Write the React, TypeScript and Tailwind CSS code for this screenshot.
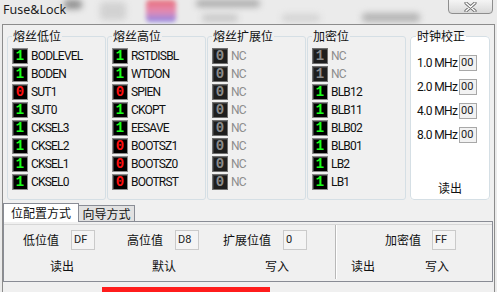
import React from 'react';

type Bit = { v: '0' | '1'; label: string; nc?: boolean };

const lowFuse: Bit[] = [
  { v: '1', label: 'BODLEVEL' },
  { v: '1', label: 'BODEN' },
  { v: '0', label: 'SUT1' },
  { v: '1', label: 'SUT0' },
  { v: '1', label: 'CKSEL3' },
  { v: '1', label: 'CKSEL2' },
  { v: '1', label: 'CKSEL1' },
  { v: '1', label: 'CKSEL0' },
];

const highFuse: Bit[] = [
  { v: '1', label: 'RSTDISBL' },
  { v: '1', label: 'WTDON' },
  { v: '0', label: 'SPIEN' },
  { v: '1', label: 'CKOPT' },
  { v: '1', label: 'EESAVE' },
  { v: '0', label: 'BOOTSZ1' },
  { v: '0', label: 'BOOTSZ0' },
  { v: '0', label: 'BOOTRST' },
];

const extFuse: Bit[] = Array.from({ length: 8 }, () => ({ v: '0' as const, label: 'NC', nc: true }));

const lockBits: Bit[] = [
  { v: '1', label: 'NC', nc: true },
  { v: '1', label: 'NC', nc: true },
  { v: '1', label: 'BLB12' },
  { v: '1', label: 'BLB11' },
  { v: '1', label: 'BLB02' },
  { v: '1', label: 'BLB01' },
  { v: '1', label: 'LB2' },
  { v: '1', label: 'LB1' },
];

const clocks = ['1.0 MHz', '2.0 MHz', '4.0 MHz', '8.0 MHz'];

function BitRow({ v, label, nc }: Bit) {
  const box = nc
    ? 'border-[#707070] bg-[#1e1e1e] text-[#8c8c8c]'
    : v === '1'
      ? 'border-[#8a8a8a] bg-black text-[#1aff1a]'
      : 'border-[#8a8a8a] bg-black text-[#ff1010]';
  return (
    <div className="flex h-[18px] items-center">
      <span
        className={`flex h-[16px] w-[16px] items-center justify-center border shadow-[inset_1px_1px_0_#3c3c3c] font-['Liberation_Mono',monospace] text-[14px] font-bold leading-none ${box}`}
      >
        {v}
      </span>
      <span
        className={`ml-[3px] font-['Roboto',sans-serif] text-[12px] leading-[14px] tracking-[-0.8px] ${nc ? 'text-[#8d8d8d]' : 'text-[#111]'}`}
      >
        {label}
      </span>
    </div>
  );
}

function FuseGroup({ title, bits }: { title: string; bits: Bit[] }) {
  return (
    <fieldset className="w-[99px] shrink-0 rounded-[3px] border border-[#d5dfe5] pb-[8px] pl-[4px] pt-[4px]">
      <legend className="px-[1px] font-['Noto_Sans_CJK_SC',sans-serif] text-[12px] leading-[14px] text-[#111]">
        {title}
      </legend>
      {bits.map((b, i) => (
        <BitRow key={i} {...b} />
      ))}
    </fieldset>
  );
}

function ValueBox({ value }: { value: string }) {
  return (
    <span className="flex h-[20px] w-[24px] items-center border border-[#cacaca] bg-[#f4f4f4] pl-[2px] font-['Roboto',sans-serif] text-[11px] text-[#222]">
      {value}
    </span>
  );
}

export default function App() {
  const cjk = "font-['Noto_Sans_CJK_SC',sans-serif] text-[12px] leading-[14px] text-[#111]";

  return (
    <div className="relative h-[292px] w-[497px] overflow-hidden bg-[#ebebeb]">
      {/* blurred desktop behind the title bar */}
      <div className="absolute left-[64px] top-[0px] h-[9px] w-[18px] rounded bg-[#8f8f8f] blur-[3px]" />
      <div className="absolute left-[100px] top-[2px] h-[18px] w-[26px] rounded bg-[#d2d2d2] blur-[3px]" />
      <div className="absolute left-[146px] top-[0px] h-[22px] w-[30px] rounded bg-gradient-to-b from-[#e8707a] via-[#e58ab0] to-[#8f86e6] blur-[2px]" />
      <div className="absolute left-[196px] top-[0px] h-[7px] w-[64px] rounded bg-[#a9a9a9] blur-[3px]" />
      <div className="absolute left-[202px] top-[14px] h-[8px] w-[36px] rounded bg-[#c9c9c9] blur-[3px]" />
      <div className="absolute left-[282px] top-[14px] h-[8px] w-[38px] rounded bg-[#d4d4d4] blur-[3px]" />
      <div className="absolute left-[362px] top-[13px] h-[9px] w-[58px] rounded bg-[#b4b4b4] blur-[3px]" />

      {/* title bar */}
      <div className="relative flex h-[24px] items-start pl-[3px] pt-[2px]">
        <span className="font-['Noto_Sans',sans-serif] text-[12.5px] leading-[16px] text-[#1e1e1e]">Fuse&amp;Lock</span>
        <div className="absolute right-[4px] top-[-2px] flex h-[16px] w-[45px] items-center justify-center rounded-b-[4px] border border-[#8e8e8e] bg-gradient-to-b from-[#f7f7f7] to-[#d9d9d9] pt-[2px]">
          <svg width="13" height="10" viewBox="0 0 13 10">
            <path d="M2 1 L11 9 M11 1 L2 9" stroke="#6e6e6e" strokeWidth="3.2" strokeLinecap="round" />
            <path d="M2 1 L11 9 M11 1 L2 9" stroke="#ffffff" strokeWidth="1.4" strokeLinecap="round" />
          </svg>
        </div>
      </div>

      {/* window body */}
      <div className="relative ml-[2px] h-[268px] w-[493px] border-x border-t border-[#8c8c8c] bg-[#f0f0f0]">
        <div className="flex items-start pl-[4px] pt-[4px]">
          <div className="flex gap-[1px]">
            <FuseGroup title="熔丝低位" bits={lowFuse} />
            <FuseGroup title="熔丝高位" bits={highFuse} />
            <FuseGroup title="熔丝扩展位" bits={extFuse} />
            <FuseGroup title="加密位" bits={lockBits} />
          </div>
          <fieldset className="ml-[4px] w-[80px] shrink-0 rounded-[4px] border border-[#d5dfe5] bg-white pl-[5px] pr-[2px]">
            <legend className={`px-[1px] ${cjk}`}>时钟校正</legend>
            <div className="flex h-[156px] flex-col pt-[8px]">
              {clocks.map((c) => (
                <div key={c} className="flex h-[24px] items-center pl-[1px]">
                  <span className="w-[42px] font-['Roboto',sans-serif] text-[12px] tracking-[-0.6px] text-[#111]">{c}</span>
                  <span className="flex h-[16px] w-[18px] items-center border border-[#a8a8a8] bg-[#f2f2f2] pl-[1px] font-['Roboto',sans-serif] text-[11px] text-[#222]">
                    00
                  </span>
                </div>
              ))}
              <div className={`mt-auto pb-[4px] pr-[3px] text-center ${cjk}`}>读出</div>
            </div>
          </fieldset>
        </div>

        {/* tabs */}
        <div className="mt-[3px] flex h-[18px] items-end">
          <div className={`relative z-10 -mb-px flex h-[19px] w-[76px] items-center justify-center border-x border-t border-[#898c95] bg-white ${cjk}`}>
            位配置方式
          </div>
          <div className={`flex h-[16px] w-[56px] items-center justify-center border-r border-t border-[#898c95] bg-[#e1e1e1] ${cjk}`}>
            向导方式
          </div>
        </div>

        {/* tab panel */}
        <div className="mr-[1px] h-[61px] border border-[#898c95] bg-[#f0f0f0]">
          <div className="mt-[2px] flex border-t border-[#d7d7d7]">
            <div className="h-[54px] w-[332px] border-r border-[#b8b8b8]">
              <div className="mt-[5px] flex h-[20px] items-center">
                <span className={`ml-[19px] ${cjk}`}>低位值</span>
                <span className="ml-[12px]"><ValueBox value="DF" /></span>
                <span className={`ml-[32px] ${cjk}`}>高位值</span>
                <span className="ml-[12px]"><ValueBox value="D8" /></span>
                <span className={`ml-[24px] ${cjk}`}>扩展位值</span>
                <span className="ml-[12px]"><ValueBox value="0" /></span>
              </div>
              <div className="mt-[9px] flex h-[14px] items-center">
                <span className={`ml-[46px] ${cjk}`}>读出</span>
                <span className={`ml-[78px] ${cjk}`}>默认</span>
                <span className={`ml-[89px] ${cjk}`}>写入</span>
              </div>
            </div>
            <div className="h-[54px] flex-1 border-l border-white">
              <div className="mt-[5px] flex h-[20px] items-center">
                <span className={`ml-[48px] ${cjk}`}>加密值</span>
                <span className="ml-[11px]"><ValueBox value="FF" /></span>
              </div>
              <div className="mt-[9px] flex h-[14px] items-center">
                <span className={`ml-[14px] ${cjk}`}>读出</span>
                <span className={`ml-[50px] ${cjk}`}>写入</span>
              </div>
            </div>
          </div>
        </div>

        <div className="ml-[99px] mt-[5px] h-[5px] w-[168px] bg-[#ff1c1c]" />
      </div>
    </div>
  );
}
